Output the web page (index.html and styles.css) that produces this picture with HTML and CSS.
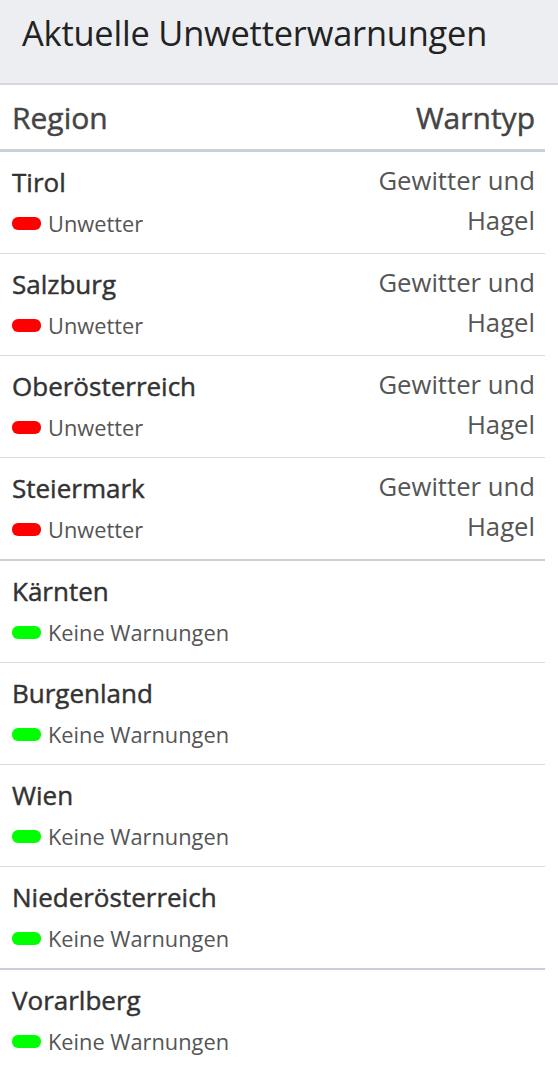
FILE: index.html
```html
<!DOCTYPE html>
<html lang="de">
<head>
<meta charset="utf-8">
<link rel="stylesheet" href="styles.css">
</head>
<body>
<div class="header"><h1 class="title">Aktuelle Unwetterwarnungen</h1></div>
<table class="warn">
<thead>
<tr><th class="col-region">Region</th><th class="col-type">Warntyp</th></tr>
</thead>
<tbody>
<tr><td><div class="name">Tirol</div><div class="status"><span class="pill red"></span>Unwetter</div></td><td class="type">Gewitter und Hagel</td></tr>
<tr><td><div class="name">Salzburg</div><div class="status"><span class="pill red"></span>Unwetter</div></td><td class="type">Gewitter und Hagel</td></tr>
<tr><td><div class="name">Oberösterreich</div><div class="status"><span class="pill red"></span>Unwetter</div></td><td class="type">Gewitter und Hagel</td></tr>
<tr class="group-end"><td><div class="name">Steiermark</div><div class="status"><span class="pill red"></span>Unwetter</div></td><td class="type">Gewitter und Hagel</td></tr>
<tr><td><div class="name">Kärnten</div><div class="status"><span class="pill green"></span>Keine Warnungen</div></td><td class="type"></td></tr>
<tr><td><div class="name">Burgenland</div><div class="status"><span class="pill green"></span>Keine Warnungen</div></td><td class="type"></td></tr>
<tr><td><div class="name">Wien</div><div class="status"><span class="pill green"></span>Keine Warnungen</div></td><td class="type"></td></tr>
<tr class="group-end"><td><div class="name">Niederösterreich</div><div class="status"><span class="pill green"></span>Keine Warnungen</div></td><td class="type"></td></tr>
<tr class="last"><td><div class="name">Vorarlberg</div><div class="status"><span class="pill green"></span>Keine Warnungen</div></td><td class="type"></td></tr>
</tbody>
</table>
</body>
</html>
```
FILE: styles.css
```css
html, body {
  margin: 0;
  padding: 0;
  background: #ffffff;
  font-family: "Open Sans", "Noto Sans", "Liberation Sans", sans-serif;
  color: #333;
}
.header {
  background: #eceef1;
  border-bottom: 2px solid #d6d9dd;
  height: 85px;
  box-sizing: border-box;
  padding: 10px 22px 0;
}
.title {
  margin: 0;
  font-size: 34.4px;
  font-weight: 400;
  line-height: 46px;
  color: #222;
  letter-spacing: -0.2px;
}
.warn {
  width: 545px;
  border-collapse: collapse;
}
.warn th {
  font-size: 30px;
  font-weight: 400;
  -webkit-text-stroke: 0.45px #444;
  color: #444;
  height: 64px;
  padding: 0 10px 0 12px;
  border-bottom: 3px solid #c9cfd6;
  vertical-align: middle;
}
.col-region { text-align: left; }
.col-type { text-align: right; }
.warn td {
  padding: 10px 10px 9px 12px;
  border-bottom: 1px solid #d9dcdf;
  vertical-align: top;
}
.warn tr.group-end td {
  border-bottom: 2px solid #c9cfd6;
}
.warn tr.last td { border-bottom: none; }
.name {
  font-size: 26px;
  font-weight: 400;
  -webkit-text-stroke: 0.45px #333;
  color: #333;
  line-height: 41px;
  height: 41px;
}
.status {
  font-size: 21.8px;
  color: #555;
  line-height: 41px;
  height: 41px;
  display: flex;
  align-items: center;
  gap: 7px;
}
.pill {
  display: inline-block;
  width: 29px;
  height: 13px;
  border-radius: 6px;
}
.pill.red { background: #ff0000; }
.pill.green { background: #00ff00; }
.type {
  text-align: right;
  font-size: 25.7px;
  color: #555;
  line-height: 40px;
}
.warn td.type { padding-top: 9px; padding-left: 20px; width: 170px; }
```
